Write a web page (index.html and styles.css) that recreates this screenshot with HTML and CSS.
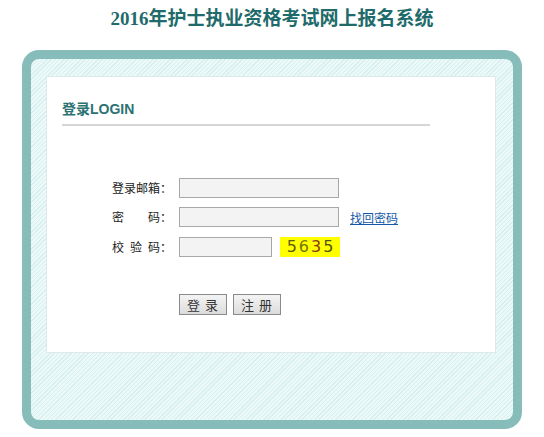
FILE: index.html
```html
<!DOCTYPE html>
<html lang="zh-CN">
<head>
<meta charset="utf-8">
<title>2016年护士执业资格考试网上报名系统</title>
<link rel="stylesheet" href="styles.css">
</head>
<body>
<h1 class="title">2016年护士执业资格考试网上报名系统</h1>
<div class="frame">
  <div class="panel">
    <h2 class="heading">登录LOGIN</h2>
    <form class="form">
      <div class="row">
        <label class="lbl">登录邮箱：</label>
        <input class="field" type="text">
      </div>
      <div class="row">
        <label class="lbl">密<span class="sp2"></span>码：</label>
        <input class="field" type="password">
        <a class="link" href="#">找回密码</a>
      </div>
      <div class="row">
        <label class="lbl">校<span class="sp1"></span>验<span class="sp1"></span>码：</label>
        <input class="field short" type="text">
        <span class="captcha"><span class="c1">5</span><span class="c2">6</span><span class="c3">3</span><span class="c4">5</span></span>
      </div>
      <div class="buttons">
        <button class="btn" type="button">登 录</button>
        <button class="btn" type="button">注 册</button>
      </div>
    </form>
  </div>
</div>
</body>
</html>
```

FILE: styles.css
```css
html, body {
  margin: 0;
  padding: 0;
  background: #ffffff;
}
body {
  width: 544px;
  font-family: "Noto Sans CJK SC", "Liberation Sans", sans-serif;
  font-size: 12px;
  color: #333333;
}
.title {
  margin: 0;
  padding-top: 6px;
  height: 44px;
  box-sizing: border-box;
  text-align: center;
  font-family: "Liberation Serif", "Noto Sans CJK SC", serif;
  font-size: 19px;
  font-weight: bold;
  line-height: 26px;
  color: #1f6b6b;
}
.frame {
  margin: 6px 0 0 22px;
  width: 500px;
  height: 379px;
  box-sizing: border-box;
  border: 9px solid #86bcba;
  border-radius: 17px;
  padding: 17px 16px 0 15px;
  background-color: #e6f7f7;
  background-image: repeating-linear-gradient(-45deg, #ebf9f9 0px, #ebf9f9 2px, #d8efef 2px, #d8efef 3px);
}
.panel {
  width: 450px;
  height: 277px;
  box-sizing: border-box;
  background: #ffffff;
  border: 1px solid #dfe9e9;
  padding: 24px 15px 0 15px;
}
.heading {
  margin: 0;
  width: 368px;
  font-family: "Liberation Sans", "Noto Sans CJK SC", sans-serif;
  font-size: 14px;
  font-weight: bold;
  line-height: 16px;
  color: #2c7272;
  padding-bottom: 7px;
  border-bottom: 2px solid #d6d6d6;
}
.form {
  margin: 52px 0 0 50px;
}
.row {
  display: flex;
  align-items: center;
  height: 20px;
  margin-bottom: 10px;
}
.row:nth-child(1) {
  margin-bottom: 9px;
}
.lbl {
  width: 67px;
  flex: none;
  font-size: 12px;
  line-height: 20px;
  color: #222222;
  white-space: nowrap;
}
.sp2 {
  display: inline-block;
  width: 24px;
}
.sp1 {
  display: inline-block;
  width: 6px;
}
.field {
  width: 160px;
  height: 20px;
  box-sizing: border-box;
  margin: 0;
  padding: 0 2px;
  border: 1px solid #a8a8a8;
  background: #f3f3f3;
  font-size: 12px;
}
.field.short {
  width: 93px;
}
.link {
  margin-left: 11px;
  font-size: 12px;
  color: #1659a8;
  text-decoration: underline;
}
.captcha {
  margin-left: 8px;
  width: 60px;
  height: 20px;
  background: #ffff00;
  font-family: "DejaVu Sans", "Liberation Sans", sans-serif;
  font-size: 16px;
  line-height: 20px;
  letter-spacing: 2px;
  text-align: center;
  padding-left: 2px;
  box-sizing: border-box;
}
.c1 { color: #5c5c10; }
.c2 { color: #767614; }
.c3 { color: #8a3a16; }
.c4 { color: #55550c; }
.buttons {
  display: flex;
  gap: 6px;
  margin: 37px 0 0 67px;
}
.btn {
  margin: 0;
  height: 21px;
  width: 48px;
  padding: 0;
  box-sizing: border-box;
  border: 1px solid #8a8a8a;
  background: linear-gradient(#f4f4f4, #dcdcdc);
  font-family: "Noto Sans CJK SC", sans-serif;
  font-size: 13px;
  line-height: 18px;
  color: #333333;
  letter-spacing: 1px;
}
```
